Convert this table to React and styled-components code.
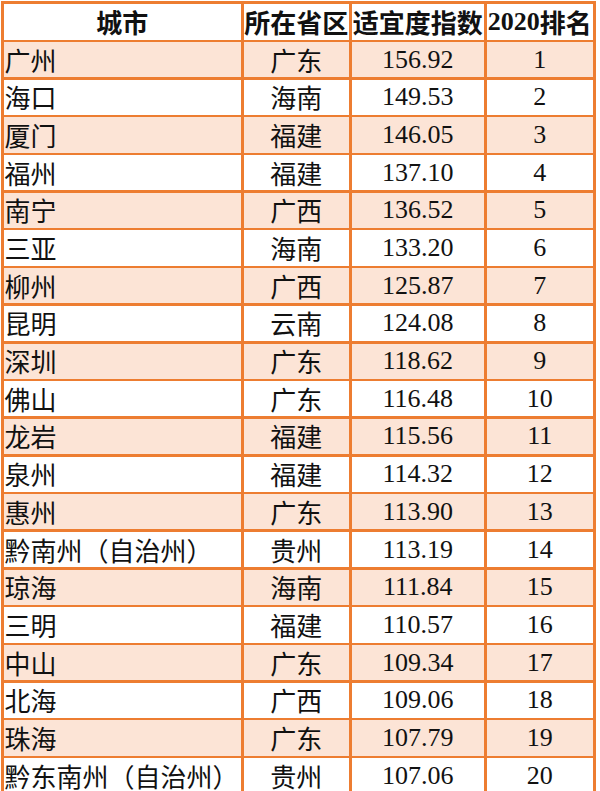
import React from "react";
import styled, { createGlobalStyle } from "styled-components";

const GlobalStyle = createGlobalStyle`
  html, body {
    margin: 0;
    padding: 0;
    background: #ffffff;
    overflow: hidden;
  }
`;

const rows = [
  ["广州", "广东", "156.92", "1"],
  ["海口", "海南", "149.53", "2"],
  ["厦门", "福建", "146.05", "3"],
  ["福州", "福建", "137.10", "4"],
  ["南宁", "广西", "136.52", "5"],
  ["三亚", "海南", "133.20", "6"],
  ["柳州", "广西", "125.87", "7"],
  ["昆明", "云南", "124.08", "8"],
  ["深圳", "广东", "118.62", "9"],
  ["佛山", "广东", "116.48", "10"],
  ["龙岩", "福建", "115.56", "11"],
  ["泉州", "福建", "114.32", "12"],
  ["惠州", "广东", "113.90", "13"],
  ["黔南州（自治州）", "贵州", "113.19", "14"],
  ["琼海", "海南", "111.84", "15"],
  ["三明", "福建", "110.57", "16"],
  ["中山", "广东", "109.34", "17"],
  ["北海", "广西", "109.06", "18"],
  ["珠海", "广东", "107.79", "19"],
  ["黔东南州（自治州）", "贵州", "107.06", "20"],
];

const CJK = `"Noto Sans CJK SC", "Noto Sans", sans-serif`;
const SERIF = `"Liberation Serif", "Noto Sans CJK SC", serif`;

const Table = styled.div`
  display: grid;
  grid-template-columns: 237.5px 105.5px 132.5px 106.5px;
  grid-template-rows: 36px;
  grid-auto-rows: 35.2px;
  gap: 2.5px;
  padding: 2.5px;
  margin: 1px 0 0 1px;
  width: max-content;
  background: #ed7d31;
`;

const Cell = styled.div`
  display: flex;
  align-items: center;
  justify-content: ${(p) => (p.$left ? "flex-start" : "center")};
  padding-left: ${(p) => (p.$left ? "1px" : "0")};
  background: ${(p) => (p.$shaded ? "#fce4d6" : "#ffffff")};
  color: #111111;
  font-family: ${(p) => (p.$num ? SERIF : CJK)};
  font-size: 26px;
  font-weight: ${(p) => (p.$bold ? 700 : 400)};
  line-height: 1;
  white-space: nowrap;
  overflow: hidden;
`;

const Digits = styled.span`
  font-family: ${SERIF};
  font-size: 26px;
  font-weight: 700;
`;

export default function App() {
  return (
    <>
      <GlobalStyle />
      <Table>
        <Cell $bold>城市</Cell>
        <Cell $bold>所在省区</Cell>
        <Cell $bold>适宜度指数</Cell>
        <Cell $bold>
          <Digits>2020</Digits>排名
        </Cell>
        {rows.map((r, i) => {
          const shaded = i % 2 === 0;
          return (
            <React.Fragment key={r[0] + i}>
              <Cell $left $shaded={shaded}>{r[0]}</Cell>
              <Cell $shaded={shaded}>{r[1]}</Cell>
              <Cell $num $shaded={shaded}>{r[2]}</Cell>
              <Cell $num $shaded={shaded}>{r[3]}</Cell>
            </React.Fragment>
          );
        })}
      </Table>
    </>
  );
}
